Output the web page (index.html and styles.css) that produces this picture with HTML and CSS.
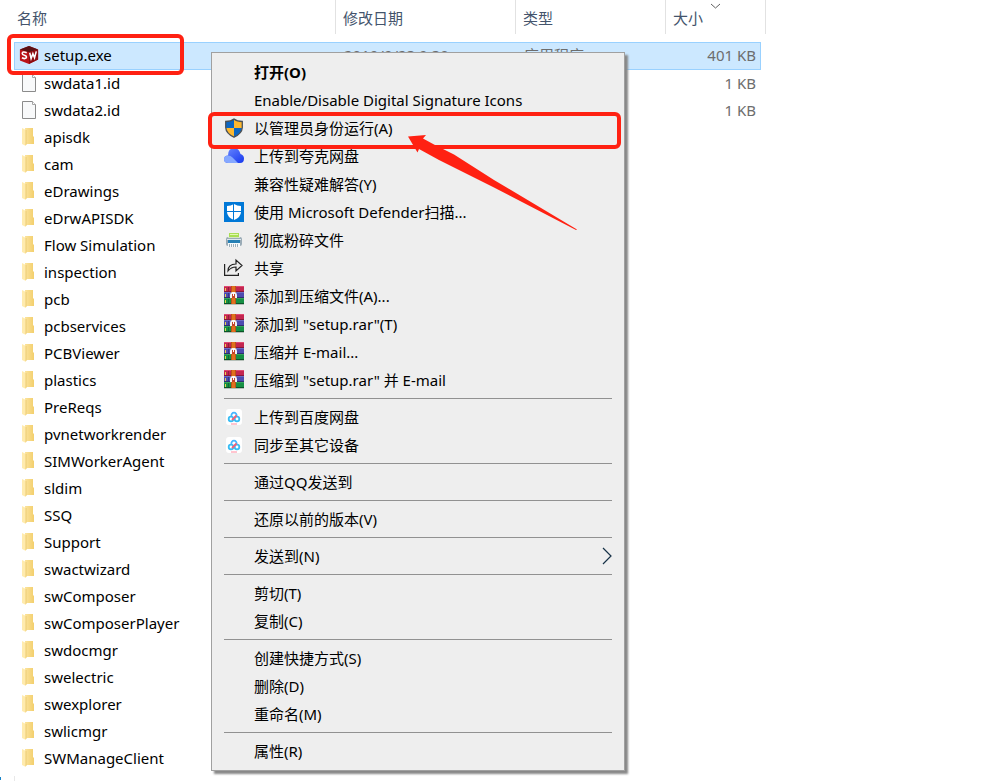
FILE: index.html
```html
<!DOCTYPE html>
<html lang="zh-CN">
<head>
<meta charset="utf-8">
<title>setup.exe</title>
<link rel="stylesheet" href="styles.css">
</head>
<body>
<svg class="defs" aria-hidden="true">
  <defs>
    <linearGradient id="gold" x1="0" x2="1"><stop offset="0" stop-color="#fbe39d"/><stop offset="1" stop-color="#f3cf6c"/></linearGradient>
    <linearGradient id="cloud" x1="0" x2="1" y2="1"><stop offset="0" stop-color="#6d8cff"/><stop offset="1" stop-color="#1738ee"/></linearGradient>
    <symbol id="folder" viewBox="0 0 14 20">
      <path d="M4 1h8v8l1 1v7H4z" fill="url(#gold)"/>
      <path d="M1 1l4 2v16l-4-2z" fill="#ffebae"/>
      <path d="M5 3v15" stroke="#eccb72" fill="none"/>
    </symbol>
    <symbol id="page" viewBox="0 0 16 20">
      <path d="M1.500 1.500h10l3 3v14h-13z" fill="#f8f9fa" stroke="#8b8b8b"/>
      <path d="M11.500 1.500v3h3" fill="#fff" stroke="#a5a5a5"/>
    </symbol>
    <symbol id="rar" viewBox="0 0 20 20">
      <rect y="18" width="20" height="1" fill="#b5bfb8"/>
      <rect width="20" height="6" fill="#c32650"/><rect width="20" height="1" fill="#df4a70"/><rect y="5" width="20" height="1" fill="#86163a"/>
      <rect y="6" width="20" height="6" fill="#4d4bb0"/><rect y="6" width="20" height="1" fill="#6c6cc4"/><rect y="11" width="20" height="1" fill="#2e2e70"/>
      <rect y="12" width="20" height="6" fill="#169044"/><rect y="12" width="20" height="1" fill="#35a45c"/><rect y="17" width="20" height="1" fill="#0b5428"/>
      <path d="M1 2h1v3H1zM1 8h1v3H1zM1 14h1v3H1z" fill="#ead14d"/>
      <path d="M4 1h1v4H4zM4 7h1v4H4zM4 13h1v4H4z" fill="#000" opacity=".25"/>
      <rect x="7" width="5" height="18" fill="#e1701d"/><rect x="7" width="1" height="18" fill="#b8531a"/><rect x="11" width="1" height="18" fill="#b8531a"/>
      <path d="M6 12V9q0-2 2-3h3q2 1 2 3v3h-2V8.500H8V12z" fill="#f3f3f3"/>
      <path d="M8 8h3v4H8z" fill="#c4432a"/><path d="M9 7h1v3H9z" fill="#fff"/>
    </symbol>
    <symbol id="baidu" viewBox="0 0 20 20">
      <rect x="2" y="2" width="16" height="16" rx="3" fill="#fff"/>
      <g fill="none" stroke-width="1.800">
        <circle cx="7" cy="12" r="2.300" stroke="#37bdf4"/><circle cx="13" cy="12" r="2.300" stroke="#37bdf4"/>
        <path d="M7.500 9a2.600 2.600 0 1 1 5 0" stroke="#48b6ff"/>
        <path d="M12.500 8.500l-4.500 4.500" stroke="#f56078"/>
      </g>
      <path d="M7 17h6" stroke="#ff8ba0"/>
    </symbol>
  </defs>
</svg>

<main class="explorer">
  <table class="files">
    <colgroup><col class="c-name"><col class="c-date"><col class="c-type"><col class="c-size"><col class="c-end"></colgroup>
    <thead>
      <tr><th scope="col">名称</th><th scope="col">修改日期</th><th scope="col">类型</th><th scope="col" colspan="2" class="sorted">大小
        <svg class="sort" width="11" height="6" viewBox="0 0 11 6"><path d="M1 1l4.500 4L10 1" fill="none" stroke="#606060"/></svg></th></tr>
    </thead>
    <tbody>
      <tr class="selected"><td><span class="file"><svg class="app" width="20" height="20" viewBox="0 0 22 22"><path d="M1 5L11 1l10 4v11l-10 5-10-4z" fill="#bb1419"/><path d="M1 5L11 1l10 4-10 3z" fill="#5a1214"/><path d="M11 8l10-3v11l-10 5z" fill="#8d0c11"/><g fill="none" stroke="#fff" stroke-width="1.700"><path d="M8.500 8.500Q4 6.500 3.500 9.200q0 1.600 2.300 2 2.600.6 2.400 2.300-.6 2.600-5 .6"/><path d="M11.800 8.500l1.500 6.500 2-5.500 1.800 4.500L19 7"/></g></svg>setup.exe</span></td><td>2019/9/23 9:30</td><td>应用程序</td><td class="size">401 KB</td></tr>
      <tr><td><span class="file"><svg class="doc" width="16" height="20"><use href="#page"/></svg>swdata1.id</span></td><td></td><td></td><td class="size">1 KB</td></tr>
      <tr><td><span class="file"><svg class="doc" width="16" height="20"><use href="#page"/></svg>swdata2.id</span></td><td></td><td></td><td class="size">1 KB</td></tr>
      <tr><td><span class="file"><svg width="14" height="20"><use href="#folder"/></svg>apisdk</span></td></tr>
      <tr><td><span class="file"><svg width="14" height="20"><use href="#folder"/></svg>cam</span></td></tr>
      <tr><td><span class="file"><svg width="14" height="20"><use href="#folder"/></svg>eDrawings</span></td></tr>
      <tr><td><span class="file"><svg width="14" height="20"><use href="#folder"/></svg>eDrwAPISDK</span></td></tr>
      <tr><td><span class="file"><svg width="14" height="20"><use href="#folder"/></svg>Flow Simulation</span></td></tr>
      <tr><td><span class="file"><svg width="14" height="20"><use href="#folder"/></svg>inspection</span></td></tr>
      <tr><td><span class="file"><svg width="14" height="20"><use href="#folder"/></svg>pcb</span></td></tr>
      <tr><td><span class="file"><svg width="14" height="20"><use href="#folder"/></svg>pcbservices</span></td></tr>
      <tr><td><span class="file"><svg width="14" height="20"><use href="#folder"/></svg>PCBViewer</span></td></tr>
      <tr><td><span class="file"><svg width="14" height="20"><use href="#folder"/></svg>plastics</span></td></tr>
      <tr><td><span class="file"><svg width="14" height="20"><use href="#folder"/></svg>PreReqs</span></td></tr>
      <tr><td><span class="file"><svg width="14" height="20"><use href="#folder"/></svg>pvnetworkrender</span></td></tr>
      <tr><td><span class="file"><svg width="14" height="20"><use href="#folder"/></svg>SIMWorkerAgent</span></td></tr>
      <tr><td><span class="file"><svg width="14" height="20"><use href="#folder"/></svg>sldim</span></td></tr>
      <tr><td><span class="file"><svg width="14" height="20"><use href="#folder"/></svg>SSQ</span></td></tr>
      <tr><td><span class="file"><svg width="14" height="20"><use href="#folder"/></svg>Support</span></td></tr>
      <tr><td><span class="file"><svg width="14" height="20"><use href="#folder"/></svg>swactwizard</span></td></tr>
      <tr><td><span class="file"><svg width="14" height="20"><use href="#folder"/></svg>swComposer</span></td></tr>
      <tr><td><span class="file"><svg width="14" height="20"><use href="#folder"/></svg>swComposerPlayer</span></td></tr>
      <tr><td><span class="file"><svg width="14" height="20"><use href="#folder"/></svg>swdocmgr</span></td></tr>
      <tr><td><span class="file"><svg width="14" height="20"><use href="#folder"/></svg>swelectric</span></td></tr>
      <tr><td><span class="file"><svg width="14" height="20"><use href="#folder"/></svg>swexplorer</span></td></tr>
      <tr><td><span class="file"><svg width="14" height="20"><use href="#folder"/></svg>swlicmgr</span></td></tr>
      <tr><td><span class="file"><svg width="14" height="20"><use href="#folder"/></svg>SWManageClient</span></td></tr>
    </tbody>
  </table>
  <div class="edge"></div>

  <div class="menu">
    <button class="default"><i></i>打开(O)</button>
    <button><i></i>Enable/Disable Digital Signature Icons</button>
    <button><i><svg width="20" height="20" viewBox="0 0 20 20"><path d="M10 1Q7 3.500 2 3.500v6Q2 15.500 10 19z" fill="#0b66c3"/><path d="M10 1q3 2.500 8 2.500v6Q18 15.500 10 19z" fill="#fdb82f"/><path d="M2 10h8v9Q3 16 2 10z" fill="#fdb82f"/><path d="M10 10h8q-1 6-8 9z" fill="#0b66c3"/><path d="M10 1Q7 3.500 1.700 3.500v6Q2 15.500 10 19.200q8-3.700 8.300-9.700v-6Q13 3.500 10 1z" fill="none" stroke="#4b5157" stroke-width="1.300"/></svg></i>以管理员身份运行(A)</button>
    <button><i><svg width="20" height="20" viewBox="0 0 20 20"><path d="M4 9.500Q4 2 10 2q5 0 6.500 6 3.500 1 3.500 4.500Q20 17 16 17H5q-5 0-5-3.500 0-4 4-4z" fill="url(#cloud)"/><path d="M1 10.500q4-2.500 7.500 1L14 17H4q-4-.5-4-3.500 0-2 1-3z" fill="#86a8ff"/></svg></i>上传到夸克网盘</button>
    <button><i></i>兼容性疑难解答(Y)</button>
    <button><i><svg width="20" height="20" viewBox="0 0 20 20"><path d="M0 0h20v20H0z" fill="#0078d7"/><path d="M10 2Q7 4 3 4v6q0 5 7 8 7-3 7-8V4q-4 0-7-2z" fill="#fff"/><path d="M9.500 2v16M2 9.500h16" stroke="#0078d7"/></svg></i>使用 Microsoft Defender扫描...</button>
    <button><i><svg width="20" height="20" viewBox="0 0 20 20"><path d="M5 3h10v5H5z" fill="#a9df54"/><path d="M6 4.500h8" stroke="#e2f9b2"/><rect x="2" y="7" width="16" height="9" rx="2" fill="#9aabb6"/><path d="M4 7h12v1H4z" fill="#d5e5c0"/><path d="M3 9h14v1H3z" fill="#dfe8ed"/><path d="M4 10h12v3H4z" fill="#2580b5"/><path d="M4 13h12v4H4z" fill="#f5fafc"/><path d="M5.500 14v3m2-3v3m2-3v3m2-3v3m2-3v3" stroke="#9dafba"/></svg></i>彻底粉碎文件</button>
    <button><i><svg width="20" height="20" viewBox="0 0 20 20" fill="none" stroke="#222" stroke-width="1.200"><path d="M.6 6v11.400h13.800V15"/><path d="M4 13q0-7 8-7V2l6 5.500-6 5.500V9q-5 0-8 4z"/></svg></i>共享</button>
    <button><i><svg width="20" height="20"><use href="#rar"/></svg></i>添加到压缩文件(A)...</button>
    <button><i><svg width="20" height="20"><use href="#rar"/></svg></i>添加到 "setup.rar"(T)</button>
    <button><i><svg width="20" height="20"><use href="#rar"/></svg></i>压缩并 E-mail...</button>
    <button><i><svg width="20" height="20"><use href="#rar"/></svg></i>压缩到 "setup.rar" 并 E-mail</button>
    <hr>
    <button><i><svg width="20" height="20"><use href="#baidu"/></svg></i>上传到百度网盘</button>
    <button><i><svg width="20" height="20"><use href="#baidu"/></svg></i>同步至其它设备</button>
    <hr>
    <button><i></i>通过QQ发送到</button>
    <hr>
    <button><i></i>还原以前的版本(V)</button>
    <hr>
    <button><i></i>发送到(N)<svg class="more" width="10" height="18" viewBox="0 0 10 18"><path d="M1 1l8 8-8 8" fill="none" stroke="#173247" stroke-width="1.200"/></svg></button>
    <hr>
    <button><i></i>剪切(T)</button>
    <button><i></i>复制(C)</button>
    <hr>
    <button><i></i>创建快捷方式(S)</button>
    <button><i></i>删除(D)</button>
    <button><i></i>重命名(M)</button>
    <hr>
    <button><i></i>属性(R)</button>
  </div>

  <div class="mark mark-file"></div>
  <div class="mark mark-run"></div>
  <svg class="arrow" width="170" height="97" viewBox="0 0 170 97"><path d="M0 2.500L18 1l-3 3.500 11 6 20 10L86 46l83 49.500-1 .5-82-42.500L31 26 11 15 9.500 18.500z" fill="#ff2112"/></svg>
</main>
</body>
</html>
```
FILE: styles.css
```css
* {
  box-sizing: border-box;
}

body {
  margin: 0;
  background: #fff;
  color: #000;
  font: 15px/20px "Noto Sans", "Noto Sans CJK SC", sans-serif;
}

svg {
  display: block;
  flex: none;
}

.defs {
  position: absolute;
  width: 0;
  height: 0;
}

.explorer {
  position: relative;
}

.files {
  width: 752px;
  margin-left: 14px;
  table-layout: fixed;
  border-collapse: separate;
  border-spacing: 0;
}

.c-name { width: 322px; }
.c-date { width: 180px; }
.c-type { width: 150px; }
.c-end { width: 5px; }

th {
  position: relative;
  height: 34px;
  padding: 2px 7px 0;
  border-right: 1px solid #e2e2e2;
  color: #44546c;
  font-weight: 400;
  text-align: left;
}

th:first-child {
  padding-left: 3px;
}

.sort {
  position: absolute;
  top: 3px;
  left: 44px;
}

tbody::before {
  content: "";
  display: table-row;
  height: 8px;
}

td {
  height: 27px;
  padding: 0 8px 2px;
  color: #6d6d6d;
  white-space: nowrap;
}

td:first-child {
  padding: 0 0 2px;
  color: #000;
}

td.size {
  padding: 0 5px 2px;
  text-align: right;
}

.file {
  display: flex;
  align-items: center;
}

.file svg {
  margin: 0 9px 0 7px;
}

.file .doc {
  margin-right: 7px;
}

.file .app {
  margin: 0 5px 0 4px;
}

.selected td {
  height: 28px;
  border: solid #99d1ff;
  border-width: 1px 0;
  background: #cce8ff;
}

.selected td:first-child {
  border-left-width: 1px;
}

.selected td.size {
  padding-right: 4px;
  border-right-width: 1px;
}

.edge {
  width: 15px;
  height: 5px;
  margin-top: 4px;
  border-right: 1px solid #e8e8e8;
  background: linear-gradient(#1683c9, #1683c9) 0 1px / 1px 3px no-repeat;
}

.menu {
  position: absolute;
  top: 52px;
  left: 211px;
  width: 414px;
  padding: 5px 0;
  border: 1px solid #a0a0a0;
  background: #eee;
  box-shadow: 3px 3px 2px #888;
}

.menu button {
  display: flex;
  align-items: center;
  width: 100%;
  height: 28px;
  padding: 0 12px;
  border: 0;
  background: none;
  color: #000;
  font: inherit;
  text-align: left;
}

.menu .default {
  font-weight: 700;
}

.menu i {
  flex: none;
  width: 20px;
  margin-right: 10px;
}

.menu hr {
  height: 1px;
  margin: 4px 12px;
  border: 0;
  background: #919191;
}

.more {
  margin-left: auto;
}

.mark {
  position: absolute;
  border: 4px solid #ff2112;
  border-radius: 6px;
}

.mark-file {
  top: 34px;
  left: 7px;
  width: 177px;
  height: 41px;
}

.mark-run {
  top: 112px;
  left: 208px;
  width: 413px;
  height: 37px;
}

.arrow {
  position: absolute;
  top: 134px;
  left: 408px;
}
```
